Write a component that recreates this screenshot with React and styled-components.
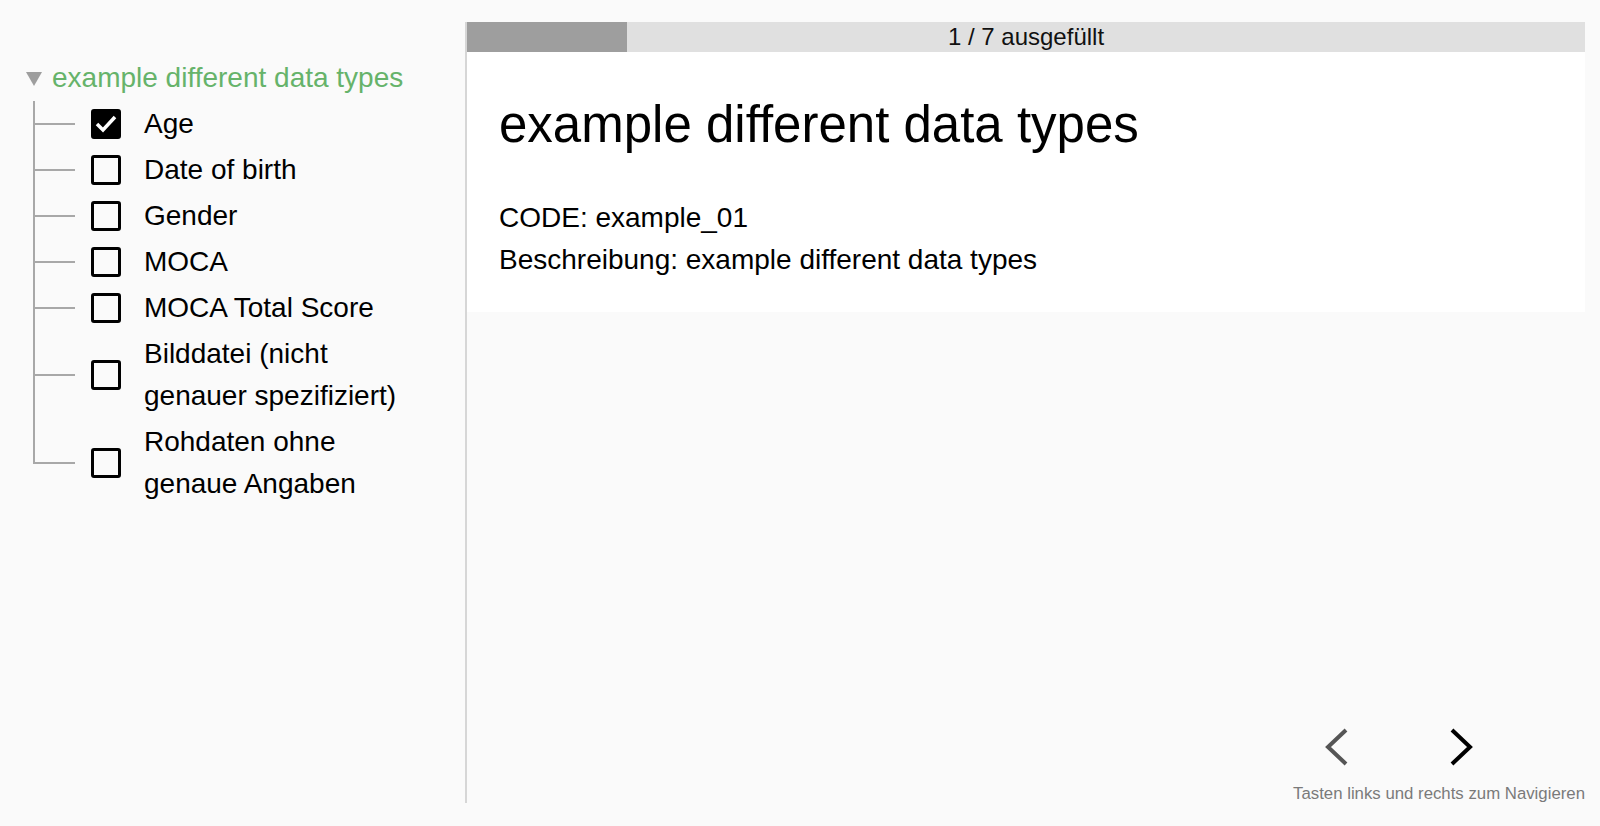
import React, { useState } from 'react'
import styled, { createGlobalStyle } from 'styled-components'

const GlobalStyle = createGlobalStyle`
  html, body {
    margin: 0;
    padding: 0;
    background: #fafafa;
    font-family: 'Liberation Sans', Arial, Helvetica, sans-serif;
    color: #000;
  }
  * { box-sizing: border-box; }
`

const items = [
  { id: 'age', label: 'Age', done: true },
  { id: 'dob', label: 'Date of birth' },
  { id: 'gender', label: 'Gender' },
  { id: 'moca', label: 'MOCA' },
  { id: 'mocaTotal', label: 'MOCA Total Score' },
  { id: 'image', label: 'Bilddatei (nicht genauer spezifiziert)' },
  { id: 'raw', label: 'Rohdaten ohne genaue Angaben' },
]

const Page = styled.div`
  display: flex;
  height: 100vh;
  padding: 22px 15px 23px 0;
`

const Sidebar = styled.aside`
  width: 467px;
  flex-shrink: 0;
  padding: 35px 56px 0 0;
  border-right: 2px solid #d6d6d6;
`

const GroupTitle = styled.div`
  display: flex;
  align-items: center;
  padding-left: 26px;
  height: 42px;
  font-size: 28px;
  line-height: 42px;
  color: #66b36a;
  cursor: pointer;
`

const Caret = styled.span`
  width: 0;
  height: 0;
  margin: 1px 10px 0 0;
  border-left: 8.5px solid transparent;
  border-right: 8.5px solid transparent;
  border-top: 14px solid #9e9e9e;
`

const Tree = styled.ul`
  list-style: none;
  margin: 2px 0 0 33px;
  padding: 0;
`

const TreeRow = styled.li`
  display: flex;
  align-items: center;
  padding: 2px 0;
  cursor: pointer;
`

const Connector = styled.span`
  align-self: stretch;
  width: 42px;
  margin: -2px 16px -2px 0;
  flex-shrink: 0;
  background:
    linear-gradient(#a8a8a8, #a8a8a8) left center / 100% 2px no-repeat,
    linear-gradient(#a8a8a8, #a8a8a8) left top / 2px ${(p) => (p.$last ? 'calc(50% + 1px)' : '100%')} no-repeat;
`

const Box = styled.span`
  width: 30px;
  height: 30px;
  flex-shrink: 0;
  border: 3px solid #000;
  border-radius: 3px;
  background: ${(p) => (p.$checked ? '#000' : 'transparent')};
  display: flex;
  align-items: center;
  justify-content: center;
`

const Label = styled.span`
  margin-left: 23px;
  font-size: 28px;
  line-height: 42px;
  color: #000;
`

const Main = styled.main`
  flex: 1;
  display: flex;
  flex-direction: column;
`

const Progress = styled.div`
  position: relative;
  height: 30px;
  background: #e0e0e0;
`

const ProgressFill = styled.div`
  height: 100%;
  background: #9e9e9e;
`

const ProgressText = styled.span`
  position: absolute;
  inset: 0;
  text-align: center;
  font-size: 24px;
  line-height: 30px;
  color: #111;
`

const Panel = styled.section`
  background: #fff;
  padding: 43px 32px 31px;
`

const Heading = styled.h1`
  margin: 0 0 42px;
  font-size: 51px;
  font-weight: 400;
  line-height: 60px;
`

const InfoLine = styled.p`
  margin: 0;
  font-size: 28px;
  line-height: 42px;
`

const Spacer = styled.div`
  flex: 1;
`

const Nav = styled.div`
  display: flex;
  flex-direction: column;
  align-items: flex-end;
`

const ArrowRow = styled.div`
  display: flex;
  gap: 64px;
  margin: 0 94px 18px 0;
`

const NavButton = styled.button`
  width: 60px;
  height: 38px;
  padding: 0;
  border: 0;
  background: none;
  display: flex;
  align-items: center;
  justify-content: center;
  color: ${(p) => (p.$muted ? '#555' : '#000')};
  cursor: pointer;
`

const Hint = styled.div`
  font-size: 16.8px;
  line-height: 19px;
  color: #7a7a7a;
`

function Chevron({ dir }) {
  const points = dir === 'left' ? '21,2 3,19 21,36' : '3,2 21,19 3,36'
  return (
    <svg width='24' height='38' viewBox='0 0 24 38'>
      <polyline points={points} fill='none' stroke='currentColor' strokeWidth='4' />
    </svg>
  )
}

function Check() {
  return (
    <svg width='24' height='24' viewBox='0 0 24 24'>
      <polyline points='3,12 9,18 21,5' fill='none' stroke='#fff' strokeWidth='3.5' />
    </svg>
  )
}

export default function App() {
  const [current, setCurrent] = useState(0)
  const done = items.filter((i) => i.done).length

  return (
    <>
      <GlobalStyle />
      <Page>
        <Sidebar>
          <GroupTitle>
            <Caret />
            example different data types
          </GroupTitle>
          <Tree>
            {items.map((item, i) => (
              <TreeRow key={item.id} onClick={() => setCurrent(i)}>
                <Connector $last={i === items.length - 1} />
                <Box $checked={item.done}>{item.done && <Check />}</Box>
                <Label>{item.label}</Label>
              </TreeRow>
            ))}
          </Tree>
        </Sidebar>
        <Main>
          <Progress>
            <ProgressFill style={{ width: `${(done / items.length) * 100}%` }} />
            <ProgressText>
              {done} / {items.length} ausgefüllt
            </ProgressText>
          </Progress>
          <Panel>
            <Heading>example different data types</Heading>
            <InfoLine>CODE: example_01</InfoLine>
            <InfoLine>Beschreibung: example different data types</InfoLine>
          </Panel>
          <Spacer />
          <Nav>
            <ArrowRow>
              <NavButton $muted onClick={() => setCurrent(Math.max(0, current - 1))}>
                <Chevron dir='left' />
              </NavButton>
              <NavButton onClick={() => setCurrent(Math.min(items.length - 1, current + 1))}>
                <Chevron dir='right' />
              </NavButton>
            </ArrowRow>
            <Hint>Tasten links und rechts zum Navigieren</Hint>
          </Nav>
        </Main>
      </Page>
    </>
  )
}
